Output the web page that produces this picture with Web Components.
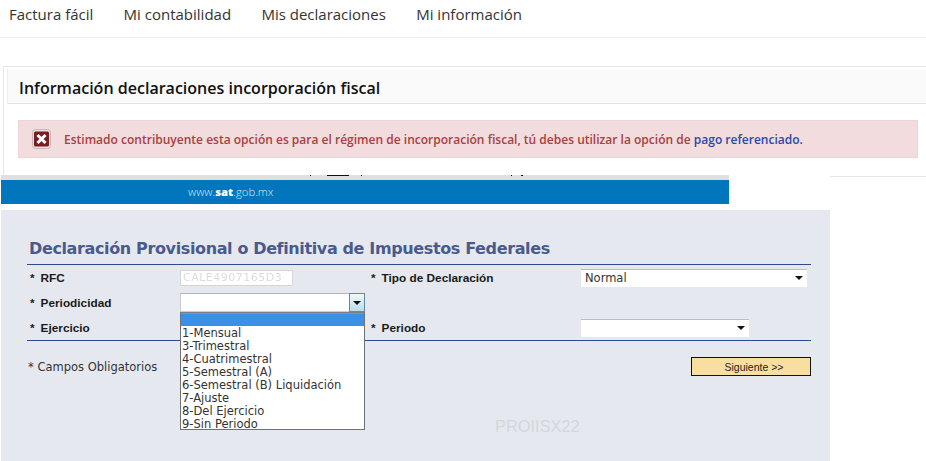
<!DOCTYPE html>
<html lang="es">
<head>
<meta charset="utf-8">
<title>Declaraciones</title>
<style>
    html, body { margin: 0; padding: 0; background: #fff; overflow: hidden; height: 461px; }
</style>
</head>
<body>
<top-nav>
    <a>Factura fácil</a>
    <a>Mi contabilidad</a>
    <a>Mis declaraciones</a>
    <a>Mi información</a>
</top-nav>
<info-panel heading="Información declaraciones incorporación fiscal">
    <alert-box>Estimado contribuyente esta opción es para el régimen de incorporación fiscal, tú debes utilizar la opción de <a style="color:#2a49a6">pago referenciado.</a></alert-box>
</info-panel>
<sat-sheet>
    <decl-form></decl-form>
</sat-sheet>

<script>
class TopNav extends HTMLElement {
    constructor() {
        super();
        this.attachShadow({ mode: 'open' });
        this.shadowRoot.innerHTML = `
            <style>
                :host {
                    display: flex;
                    gap: 30.3px;
                    box-sizing: border-box;
                    height: 38px;
                    padding: 4px 0 0 9px;
                    border-bottom: 1px solid #eeeeee;
                    font: 15px/20px "Open Sans", sans-serif;
                    color: #333;
                }
            </style>
            <slot></slot>
        `;
    }
}

class InfoPanel extends HTMLElement {
    constructor() {
        super();
        this.attachShadow({ mode: 'open' });
        this.shadowRoot.innerHTML = `
            <style>
                :host {
                    display: block;
                    box-sizing: border-box;
                    height: 111px;
                    margin: 28px 0 0 3px;
                    padding: 2px 0 0 3px;
                    border: 1px solid #e6e6e6;
                    border-right: 0;
                    font-family: "Open Sans", sans-serif;
                }
                .head {
                    box-sizing: border-box;
                    height: 35px;
                    padding-left: 11px;
                    background: #fafafa;
                    border-left: 1px solid #eee;
                    border-bottom: 1px solid #e2e2e2;
                    font-size: 16.05px;
                    font-weight: 600;
                    line-height: 38px;
                    color: #111;
                }
                .body { padding: 16px 8px 0 11px; }
            </style>
            <div class="head"></div>
            <div class="body"><slot></slot></div>
        `;
    }

    connectedCallback() {
        this.shadowRoot.querySelector('.head').textContent = this.getAttribute('heading');
    }
}

class AlertBox extends HTMLElement {
    constructor() {
        super();
        this.attachShadow({ mode: 'open' });
        this.shadowRoot.innerHTML = `
            <style>
                :host {
                    display: flex;
                    align-items: center;
                    gap: 13px;
                    box-sizing: border-box;
                    height: 38px;
                    padding-left: 13px;
                    background: #f2dcdd;
                    border: 1px solid #eed5d6;
                    font-size: 12.02px;
                    font-weight: 600;
                    color: #a9403f;
                    white-space: nowrap;
                }
                svg { flex: none; }
            </style>
            <svg width="19" height="20" viewBox="0 0 19 20">
                <rect x="0.5" y="0.5" width="18" height="19" rx="3" fill="#ebdfdf" stroke="#c6b8b8"/>
                <rect x="2" y="2.5" width="15" height="15" rx="1.5" fill="#7a1c20"/>
                <path d="M5.5 6l8 8M13.5 6l-8 8" stroke="#fff" stroke-width="3"/>
            </svg>
            <span><slot></slot></span>
        `;
    }
}

class SatSheet extends HTMLElement {
    constructor() {
        super();
        this.attachShadow({ mode: 'open' });
        this.shadowRoot.innerHTML = `
            <style>
                :host {
                    display: block;
                    position: relative;
                    width: 829px;
                    margin: -2px 0 0 1px;
                    background: #fff;
                }
                .strip { position: relative; width: 728px; height: 5px; background: #dfdfdf; }
                .strip i { position: absolute; top: 0; height: 1px; background: #111; }
                .band {
                    box-sizing: border-box;
                    width: 728px;
                    height: 24px;
                    margin-bottom: 6px;
                    padding-left: 187px;
                    background: #0276bd;
                    font: 300 11.3px/24px "Open Sans", sans-serif;
                    color: #d6e8f4;
                }
                .band b { font-weight: 800; color: #fff; }
            </style>
            <div class="strip">
                <i style="left:326px;width:22px"></i>
                <i style="left:309px;width:1px"></i>
                <i style="left:360px;width:1px"></i>
                <i style="left:510px;width:1px"></i>
                <i style="left:520px;width:2px"></i>
            </div>
            <div class="band">www.<b>sat</b>.gob.mx</div>
            <slot></slot>
        `;
    }
}

class FormSelect extends HTMLElement {
    static get observedAttributes() { return ['value']; }

    constructor() {
        super();
        this.attachShadow({ mode: 'open' });
        this.shadowRoot.innerHTML = `
            <style>
                :host {
                    display: block;
                    position: relative;
                    box-sizing: border-box;
                    height: 18px;
                    background: #fff;
                    border-top: 1px solid #b9bdc4;
                    font: 11.5px/16px "DejaVu Sans", sans-serif;
                    color: #333;
                }
                :host([open]) {
                    height: 19px;
                    border: 1px solid #c9ced6;
                    border-top-color: #aeb3ba;
                }
                .value { padding-left: 4px; }
                .arrow {
                    position: absolute;
                    top: 6px;
                    right: 4px;
                    width: 0;
                    height: 0;
                    border: 4px solid transparent;
                    border-top: 4px solid #111;
                    border-bottom: 0;
                }
                :host([open]) .btn {
                    position: absolute;
                    top: -1px;
                    right: -1px;
                    width: 16px;
                    height: 19px;
                    box-sizing: border-box;
                    border: 1px solid #5f8ca6;
                    background: linear-gradient(#f2f8fc, #bcdcec);
                }
                :host([open]) .arrow { top: 7px; right: 3px; }
                .list {
                    display: none;
                    position: absolute;
                    z-index: 2;
                    top: 18px;
                    left: -1px;
                    right: -1px;
                    box-sizing: border-box;
                    height: 118px;
                    background: #fff;
                    border: 1px solid #6d7278;
                    border-top-color: #7d7f82;
                    line-height: 13px;
                }
                :host([open]) .list { display: block; }
                .selected { height: 12px; margin-bottom: 1px; background: #3a8fe6; border-top: 1px solid #8f8f8f; }
                .items { padding-left: 1px; }
            </style>
            <div class="value"></div>
            <div class="btn"><span class="arrow"></span></div>
            <div class="list">
                <div class="selected"></div>
                <div class="items"><slot></slot></div>
            </div>
        `;
    }

    attributeChangedCallback(name, oldValue, value) {
        this.shadowRoot.querySelector('.value').textContent = value;
    }
}

class DeclForm extends HTMLElement {
    constructor() {
        super();
        this.attachShadow({ mode: 'open' });
        this.shadowRoot.innerHTML = `
            <style>
                :host {
                    display: block;
                    box-sizing: border-box;
                    height: 251px;
                    padding: 27px 19px 0 27px;
                    background: #e5e9ef;
                    font-family: "Liberation Sans", Arial, sans-serif;
                }
                h1 {
                    margin: 0;
                    height: 27px;
                    padding-left: 1px;
                    font: bold 16px/24px "DejaVu Sans", sans-serif;
                    letter-spacing: -0.37px;
                    color: #4a5a8c;
                    white-space: nowrap;
                }
                .grid {
                    display: grid;
                    grid-template-columns: 152px 191px 210px 231px;
                    grid-auto-rows: 25px;
                    align-items: center;
                    border-top: 1px solid #2f4a8f;
                    border-bottom: 1px solid #2f4a8f;
                    margin-left: -1px;
                    padding-left: 1px;
                }
                .label {
                    font-size: 11.8px;
                    font-weight: bold;
                    color: #1a1a1a;
                    padding-left: 2px;
                }
                .label i { font-style: normal; margin-right: 6px; }
                .right { margin-left: -2px; }
                .rfc {
                    box-sizing: border-box;
                    width: 113px;
                    height: 16px;
                    padding-left: 2px;
                    background: #fff;
                    border: 1px solid #d6d6d6;
                    font: 11px/14px "DejaVu Sans", sans-serif;
                    letter-spacing: 0.5px;
                    color: #dcdcdc;
                    filter: blur(0.7px);
                    overflow: hidden;
                }
                .opt { display: block; }
                .foot {
                    display: flex;
                    justify-content: space-between;
                    align-items: center;
                    padding-top: 16px;
                }
                .req { font: 11.5px/14px "DejaVu Sans", sans-serif; color: #333; }
                button {
                    box-sizing: border-box;
                    width: 120px;
                    height: 19px;
                    padding: 0 0 0 6px;
                    background: #f8dfa0;
                    border: 1px solid #111;
                    border-radius: 0;
                    font: 10.5px/16px "Liberation Sans", Arial, sans-serif;
                    color: #222;
                }
                .code {
                    margin: 41px 0 0 467px;
                    font-size: 16.4px;
                    line-height: 18px;
                    color: #d2d6dd;
                }
            </style>
            <h1>Declaración Provisional o Definitiva de Impuestos Federales</h1>
            <div class="grid">
                <div class="label"><i>*</i>RFC</div>
                <div><div class="rfc">CALE4907165D3</div></div>
                <div class="label right"><i>*</i>Tipo de Declaración</div>
                <div><form-select value="Normal" style="width:226px"></form-select></div>

                <div class="label"><i>*</i>Periodicidad</div>
                <div>
                    <form-select open style="width:185px">
                        <span class="opt">1-Mensual</span>
                        <span class="opt">3-Trimestral</span>
                        <span class="opt">4-Cuatrimestral</span>
                        <span class="opt">5-Semestral (A)</span>
                        <span class="opt">6-Semestral (B) Liquidación</span>
                        <span class="opt">7-Ajuste</span>
                        <span class="opt">8-Del Ejercicio</span>
                        <span class="opt">9-Sin Periodo</span>
                    </form-select>
                </div>
                <div></div>
                <div></div>

                <div class="label"><i>*</i>Ejercicio</div>
                <div></div>
                <div class="label right"><i>*</i>Periodo</div>
                <div><form-select style="width:168px"></form-select></div>
            </div>
            <div class="foot">
                <span class="req">* Campos Obligatorios</span>
                <button>Siguiente &gt;&gt;</button>
            </div>
            <div class="code">PROIISX22</div>
        `;
    }
}

customElements.define('top-nav', TopNav);
customElements.define('info-panel', InfoPanel);
customElements.define('alert-box', AlertBox);
customElements.define('sat-sheet', SatSheet);
customElements.define('form-select', FormSelect);
customElements.define('decl-form', DeclForm);
</script>
</body>
</html>
